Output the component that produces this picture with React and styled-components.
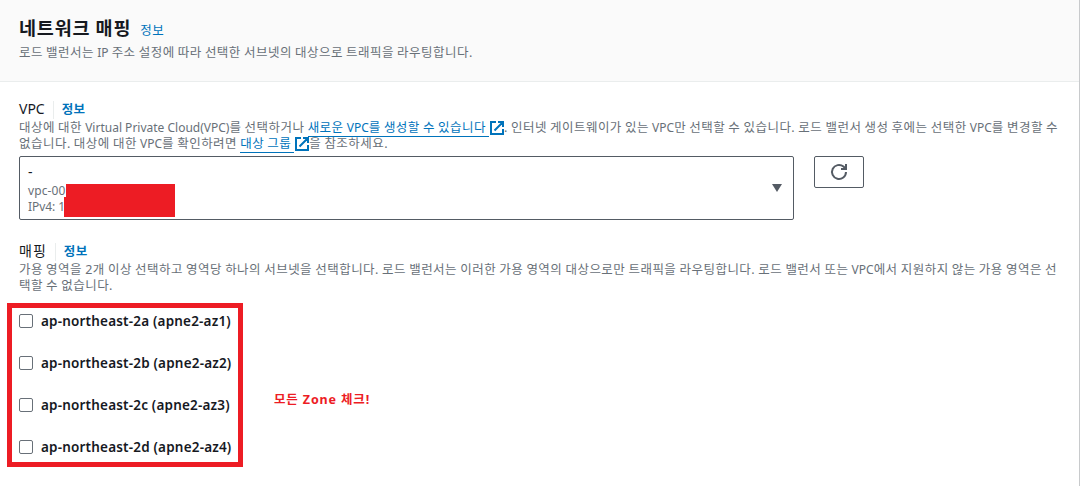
import styled, { createGlobalStyle } from "styled-components";

const GlobalStyle = createGlobalStyle`
  * {
    box-sizing: border-box;
  }
  body {
    margin: 0;
    background: #fff;
    color: #16191f;
    font-family: "Noto Sans", "Noto Sans CJK KR", sans-serif;
    overflow: hidden;
  }
`;

const Panel = styled.section`
  width: 1080px;
  height: 486px;
  border-right: 1px solid #c8cacc;
`;

const Header = styled.header`
  height: 82px;
  padding: 15px 19px 0;
  background: #fafafa;
  border-bottom: 1px solid #eaeded;
`;

const TitleRow = styled.div`
  display: flex;
  align-items: baseline;
  height: 30px;
`;

const Title = styled.h2`
  margin: 0;
  font-size: 18.5px;
  line-height: 26px;
  font-weight: 700;
  letter-spacing: 0.8px;
  word-spacing: -0.3px;
  white-space: nowrap;
`;

const InfoLink = styled.a`
  margin-left: ${({ $gap }) => $gap}px;
  color: #0073bb;
  font-size: 12.5px;
  line-height: 16px;
  font-weight: ${({ $bold }) => ($bold ? 700 : 400)};
  letter-spacing: 0.4px;
`;

const Line = styled.div`
  height: 16px;
  color: #687078;
  font-size: 12.5px;
  line-height: 16px;
  letter-spacing: 0.47px;
  word-spacing: -0.56px;
  white-space: nowrap;
`;

const Latin = styled.span`
  font-size: 12px;
  letter-spacing: 0;
  word-spacing: 0;
`;

const TextLink = styled.a`
  display: inline-block;
  height: 17px;
  color: #0073bb;
  border-bottom: 1px solid #0073bb;
  padding-right: 3px;
  vertical-align: top;
`;

const Content = styled.div`
  padding: 18px 19px 0;
`;

const LabelRow = styled.div`
  display: flex;
  align-items: center;
  height: 20px;
  font-size: 14px;
`;

const Label = styled.span`
  height: 18px;
  padding-right: 8px;
  line-height: ${({ $lineHeight }) => $lineHeight}px;
  border-right: 1px solid #eaeded;
  letter-spacing: ${({ $spacing }) => $spacing}px;
`;

const SelectRow = styled.div`
  display: flex;
  align-items: flex-start;
  gap: 20px;
  margin-top: 4px;
`;

const Select = styled.div`
  display: flex;
  align-items: center;
  justify-content: space-between;
  width: 775px;
  height: 64px;
  padding: 0 11px 0 8px;
  border: 1px solid #545b64;
  border-radius: 2px;
`;

const SelectedVpc = styled.div`
  position: relative;
  font-size: 14px;
  line-height: 22px;
`;

const VpcDetail = styled.div`
  color: #687078;
  font-size: 12px;
  line-height: 16px;
  letter-spacing: ${({ $spacing }) => $spacing}px;
`;

const Redaction = styled.span`
  position: absolute;
  left: ${({ $left }) => $left}px;
  top: ${({ $top }) => $top}px;
  width: ${({ $width }) => $width}px;
  height: ${({ $height }) => $height}px;
  background: #ed1c24;
`;

const RefreshButton = styled.button`
  display: flex;
  align-items: center;
  justify-content: center;
  width: 50px;
  height: 32px;
  padding: 0;
  background: #fff;
  border: 1px solid #545b64;
  border-radius: 2px;
`;

const MappingField = styled.div`
  margin-top: 22px;
`;

const ZoneArea = styled.div`
  display: flex;
  align-items: flex-start;
  margin: 9px 0 0 -12px;
`;

const ZoneBox = styled.div`
  display: flex;
  flex-direction: column;
  gap: 22px;
  width: 236px;
  height: 164px;
  padding: 3px 0 0 7px;
  border: 5px solid #ed1c24;
`;

const Zone = styled.label`
  display: flex;
  align-items: center;
  gap: 8px;
  height: 20px;
  font-size: 13.5px;
  font-weight: 600;
  white-space: nowrap;
  letter-spacing: 0.19px;
`;

const Checkbox = styled.input`
  appearance: none;
  width: 14px;
  height: 14px;
  margin: 0;
  background: #fff;
  border: 1px solid #687078;
  border-radius: 2px;
`;

const Note = styled.p`
  margin: 88px 0 0 31px;
  color: #ed1c24;
  font-size: 12.5px;
  line-height: 18px;
  font-weight: 700;
  letter-spacing: 0.85px;
`;

const LinkIcon = styled.svg`
  margin: 0 0 0 1px;
  vertical-align: top;
`;

const ExternalIcon = () => (
  <LinkIcon width="14" height="15" viewBox="0 0 14 15" fill="none" stroke="#0073bb" strokeWidth="2">
    <path d="M6 2H1V14H13V9M8 2H13V7M13 2L4.5 10.5" />
  </LinkIcon>
);

const zones = [
  "ap-northeast-2a (apne2-az1)",
  "ap-northeast-2b (apne2-az2)",
  "ap-northeast-2c (apne2-az3)",
  "ap-northeast-2d (apne2-az4)",
];

const App = () => {
  return (
    <>
      <GlobalStyle />
      <Panel>
        <Header>
          <TitleRow>
            <Title>네트워크 매핑</Title>
            <InfoLink $gap={9}>정보</InfoLink>
          </TitleRow>
          <Line>
            로드 밸런서는 <Latin>IP</Latin> 주소 설정에 따라 선택한 서브넷의 대상으로 트래픽을 라우팅합니다.
          </Line>
        </Header>
        <Content>
          <LabelRow>
            <Label $spacing={0} $lineHeight={15}>VPC</Label>
            <InfoLink $gap={8} $bold>정보</InfoLink>
          </LabelRow>
          <Line>
            대상에 대한 <Latin>Virtual Private Cloud(VPC)</Latin>를 선택하거나{" "}
            <TextLink>
              새로운 <Latin>VPC</Latin>를 생성할 수 있습니다
            </TextLink>
            <ExternalIcon />. 인터넷 게이트웨이가 있는 <Latin>VPC</Latin>만 선택할 수 있습니다. 로드 밸런서 생성 후에는 선택한 <Latin>VPC</Latin>를 변경할 수
          </Line>
          <Line>
            없습니다. 대상에 대한 <Latin>VPC</Latin>를 확인하려면 <TextLink>대상 그룹</TextLink>
            <ExternalIcon />을 참조하세요.
          </Line>
          <SelectRow>
            <Select>
              <SelectedVpc>
                -
                <VpcDetail $spacing={0.1}>vpc-00</VpcDetail>
                <VpcDetail $spacing={-0.05}>IPv4: 1</VpcDetail>
                <Redaction $left={38} $top={23} $width={109} $height={33} />
                <Redaction $left={36} $top={36} $width={20} $height={20} />
              </SelectedVpc>
              <svg width="10" height="8" viewBox="0 0 10 8" fill="#545b64">
                <path d="M0 0H10L5 8Z" />
              </svg>
            </Select>
            <RefreshButton aria-label="refresh">
              <svg width="18" height="18" viewBox="0 0 18 18" fill="none" stroke="#545b64" strokeWidth="2">
                <path d="M16 9A7 7 0 1 1 13.5 3.6L16 6M16 1V6H11" />
              </svg>
            </RefreshButton>
          </SelectRow>
          <MappingField>
            <LabelRow>
              <Label $spacing={1} $lineHeight={15}>매핑</Label>
              <InfoLink $gap={8} $bold>정보</InfoLink>
            </LabelRow>
            <Line>
              가용 영역을 2개 이상 선택하고 영역당 하나의 서브넷을 선택합니다. 로드 밸런서는 이러한 가용 영역의 대상으로만 트래픽을 라우팅합니다. 로드 밸런서 또는 <Latin>VPC</Latin>에서 지원하지 않는 가용 영역은 선
            </Line>
            <Line>택할 수 없습니다.</Line>
          </MappingField>
          <ZoneArea>
            <ZoneBox>
              {zones.map((zone) => (
                <Zone key={zone}>
                  <Checkbox type="checkbox" />
                  {zone}
                </Zone>
              ))}
            </ZoneBox>
            <Note>모든 Zone 체크!</Note>
          </ZoneArea>
        </Content>
      </Panel>
    </>
  );
};

export default App;
